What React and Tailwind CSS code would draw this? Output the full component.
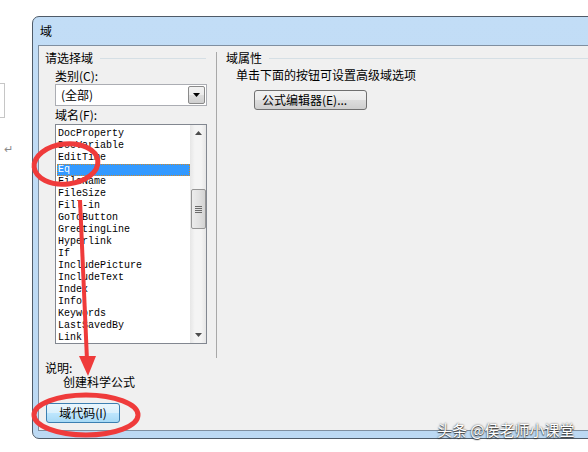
import React from 'react';

const ITEMS = [
  'DocProperty', 'DocVariable', 'EditTime', 'Eq', 'FileName', 'FileSize', 'Fill-in',
  'GoToButton', 'GreetingLine', 'Hyperlink', 'If', 'IncludePicture', 'IncludeText',
  'Index', 'Info', 'Keywords', 'LastSavedBy', 'Link',
];

const CJK = { fontFamily: '"Noto Sans CJK SC", "Noto Sans", sans-serif' };

function GroupHeading({ label, lineClass }) {
  return (
    <div className="flex items-center h-[14px]">
      <span className="leading-[14px]">{label}</span>
      <div className={`h-px bg-[#d5dfe5] ml-[7px] ${lineClass}`} />
    </div>
  );
}

function Win7Button({ children, primary, className }) {
  return (
    <div
      className={`flex items-center justify-center rounded-[3px] border text-[12px] leading-none ${
        primary
          ? 'border-[#3c7fb1] bg-[linear-gradient(#eaf6fd_0%,#d9f0fc_50%,#bee6fd_51%,#a7d9f5_100%)]'
          : 'border-[#707070] bg-[linear-gradient(#f2f2f2_0%,#ebebeb_50%,#dddddd_51%,#cfcfcf_100%)]'
      } ${className}`}
    >
      {children}
    </div>
  );
}

function Scrollbar() {
  return (
    <div className="w-[16px] h-full bg-[linear-gradient(90deg,#e6e6e6,#f4f4f4_30%,#f4f4f4_70%,#e6e6e6)] flex flex-col items-center">
      <div className="h-[16px] flex items-center justify-center">
        <svg width="7" height="4" viewBox="0 0 7 4"><path d="M0 4 L3.5 0 L7 4 Z" fill="#4d4d4d" /></svg>
      </div>
      <div className="mt-[48px] w-[15px] h-[40px] rounded-[2px] border border-[#959595] bg-[linear-gradient(90deg,#ececec,#e2e2e2_50%,#d3d3d3)] flex flex-col items-center justify-center gap-[1px]">
        {[0, 1, 2, 3].map(i => <div key={i} className="w-[7px] h-px bg-[#6b6b6b]" />)}
      </div>
      <div className="flex-1" />
      <div className="h-[16px] flex items-center justify-center">
        <svg width="7" height="4" viewBox="0 0 7 4"><path d="M0 0 L3.5 4 L7 0 Z" fill="#4d4d4d" /></svg>
      </div>
    </div>
  );
}

export default function App() {
  return (
    <div className="relative w-[588px] h-[452px] overflow-hidden bg-white text-[12px] text-black" style={CJK}>
      {/* document behind the dialog */}
      <div className="absolute left-[-1px] top-[83px] w-[6px] h-[35px] border border-[#c6c6c6]" />
      <div className="absolute left-[4px] top-[140px] text-[11px] text-[#8a8a8a]">↵</div>

      {/* dialog window */}
      <div className="absolute left-[32px] top-[16px] w-[600px] h-[423px] border border-[#4f5b68] rounded-l-[7px] bg-[linear-gradient(180deg,#c2ddf6,#bcd9f3)] flex flex-col">
        <div className="h-[28px] pl-[7px] flex items-center">
          <span className="leading-none">域</span>
        </div>

        <div className="ml-[5px] mb-[7px] flex-1 border border-[#7f8fa0] bg-[#f0f0f0] flex">
          {/* left column */}
          <div className="w-[177px] pl-[6px] pr-[10px] pt-[5px] flex flex-col">
            <GroupHeading label="请选择域" lineClass="flex-1" />
            <div className="ml-[10px] flex flex-col">
              <div className="mt-[4px] leading-[14px]">类别(C):</div>
              <div className="mt-[1px] h-[22px] w-[152px] border border-[#abadb3] bg-white flex items-center">
                <span className="pl-[5px] flex-1">(全部)</span>
                <div className="w-[17px] h-[18px] mr-[1px] border border-[#8a8a8a] rounded-[2px] bg-[linear-gradient(#f2f2f2,#ebebeb_50%,#dddddd_51%,#cfcfcf)] flex items-center justify-center">
                  <svg width="7" height="4" viewBox="0 0 7 4"><path d="M0 0 L3.5 4 L7 0 Z" fill="#000" /></svg>
                </div>
              </div>
              <div className="mt-[2px] leading-[14px]">域名(F):</div>
              <div className="mt-[2px] h-[220px] w-[152px] border border-[#828790] bg-white flex">
                <div
                  className="flex-1 pt-[3px] pl-[1px] text-[10px] leading-[12px]"
                  style={{ fontFamily: '"Liberation Mono", "DejaVu Sans Mono", monospace' }}
                >
                  {ITEMS.map(it => (
                    <div
                      key={it}
                      className={`h-[12px] pl-[1px] ${it === 'Eq' ? 'bg-[#3399ff] outline-1 outline-dotted outline-[#d08a2a] -outline-offset-1 text-white' : ''}`}
                    >
                      {it}
                    </div>
                  ))}
                </div>
                <Scrollbar />
              </div>
            </div>
            <div className="mt-[17px] leading-[14px]">说明:</div>
            <div className="ml-[18px] leading-[14px]">创建科学公式</div>
            <Win7Button primary className="mt-[14px] ml-[1px] w-[74px] h-[20px]">域代码(I)</Win7Button>
          </div>

          {/* separator */}
          <div className="w-px h-[306px] mt-[6px] bg-[#a8a8a8]" />

          {/* right column */}
          <div className="flex-1 pl-[9px] pt-[5px] flex flex-col">
            <GroupHeading label="域属性" lineClass="flex-1" />
            <div className="ml-[10px] mt-[3px] leading-[14px]">单击下面的按钮可设置高级域选项</div>
            <Win7Button className="ml-[28px] mt-[8px] w-[113px] h-[20px] justify-start pl-[7px]">公式编辑器(E)...</Win7Button>
          </div>
        </div>
      </div>

      {/* red annotations */}
      <svg className="absolute inset-0 pointer-events-none" width="588" height="452" viewBox="0 0 588 452">
        <ellipse cx="66" cy="164" rx="32" ry="20" fill="none" stroke="#ef3b3b" strokeWidth="5" transform="rotate(-6 66 164)" />
        <line x1="80" y1="200" x2="87" y2="360" stroke="#ef3b3b" strokeWidth="4" />
        <path d="M79 356 L96 356 L88 376 Z" fill="#ef3b3b" />
        <ellipse cx="86" cy="415" rx="52" ry="20" fill="none" stroke="#ef3b3b" strokeWidth="5" />
      </svg>

      {/* watermark */}
      <div className="absolute left-[437px] top-[421px] text-[15px] leading-[18px] text-white [text-shadow:0_0_2px_#444,0_1px_1px_#333]">
        头条 @侯老师小课堂
      </div>
    </div>
  );
}
